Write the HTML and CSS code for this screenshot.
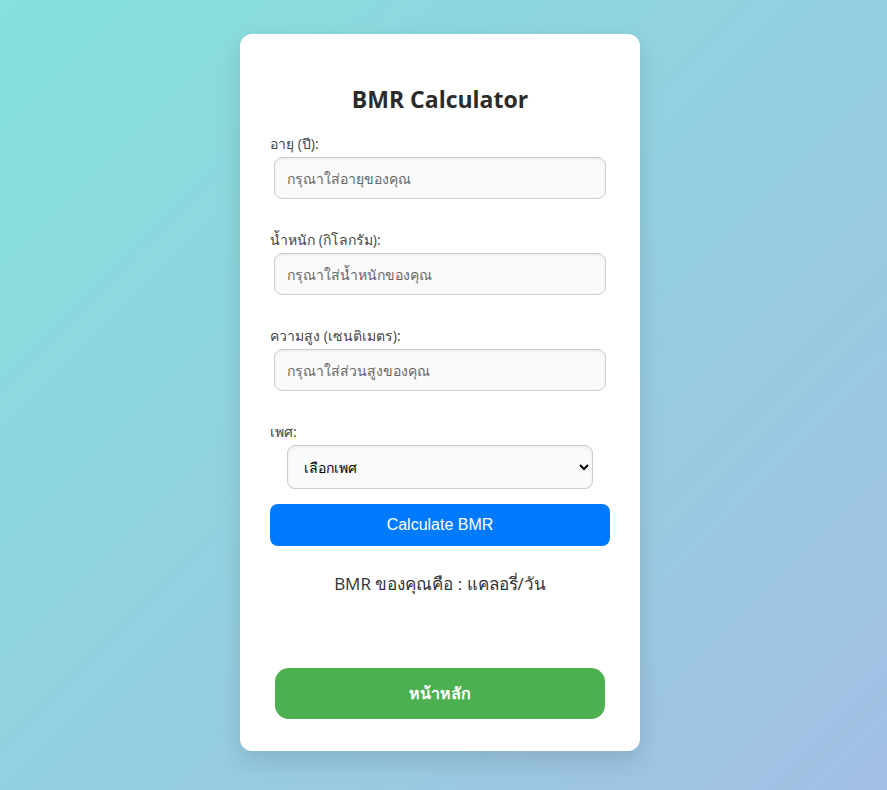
FILE: index.html
```html
<!DOCTYPE html>
<html lang="th">
<head>
<meta charset="utf-8">
<title>BMR Calculator</title>
<link rel="stylesheet" href="styles.css">
</head>
<body>
<main class="card">
  <h1 class="title">BMR Calculator</h1>
  <form class="form">
    <div class="field">
      <label class="label" for="age">อายุ (ปี):</label>
      <input class="input" id="age" type="number" placeholder="กรุณาใส่อายุของคุณ">
    </div>
    <div class="field">
      <label class="label" for="weight">น้ำหนัก (กิโลกรัม):</label>
      <input class="input" id="weight" type="number" placeholder="กรุณาใส่น้ำหนักของคุณ">
    </div>
    <div class="field">
      <label class="label" for="height">ความสูง (เซนติเมตร):</label>
      <input class="input" id="height" type="number" placeholder="กรุณาใส่ส่วนสูงของคุณ">
    </div>
    <div class="field field-last">
      <label class="label" for="gender">เพศ:</label>
      <select class="select" id="gender">
        <option>เลือกเพศ</option>
        <option>ชาย</option>
        <option>หญิง</option>
      </select>
    </div>
    <button type="button" class="btn-calc">Calculate BMR</button>
  </form>
  <p class="result">BMR ของคุณคือ : แคลอรี่/วัน</p>
  <button type="button" class="btn-home">หน้าหลัก</button>
</main>
</body>
</html>
```
FILE: styles.css
```css
html, body {
  margin: 0;
  padding: 0;
}
body {
  box-sizing: border-box;
  min-height: 790px;
  padding-right: 7px;
  background: linear-gradient(135deg, #84e1dc 0%, #a3bfe4 100%);
  font-family: "Open Sans", "Noto Sans", sans-serif;
  color: #333;
  display: flex;
  justify-content: center;
  align-items: flex-start;
}
.card {
  box-sizing: border-box;
  width: 400px;
  margin-top: 34px;
  background: #fff;
  border-radius: 12px;
  box-shadow: 0 10px 25px rgba(0, 0, 0, 0.12);
  padding: 50px 30px 32px;
  display: flex;
  flex-direction: column;
}
.title {
  margin: 0 0 21px;
  text-align: center;
  font-size: 23px;
  line-height: 30px;
  font-weight: 700;
  color: #2b2b2b;
}
.form {
  display: flex;
  flex-direction: column;
}
.field {
  display: flex;
  flex-direction: column;
  margin-bottom: 32px;
}
.field-last {
  margin-bottom: 15px;
}
.label {
  font-size: 14px;
  line-height: 17px;
  color: #444;
  margin-bottom: 5px;
}
.input {
  box-sizing: border-box;
  align-self: center;
  width: 332px;
  height: 42px;
  padding: 0 12px;
  border: 1px solid #ccc;
  border-radius: 8px;
  background: #fafafa;
  box-shadow: inset 0 1px 3px rgba(0,0,0,0.08);
  font-family: inherit;
  font-size: 14px;
  color: #333;
  outline: none;
}
.input::placeholder {
  color: #666;
}
.input::-webkit-outer-spin-button,
.input::-webkit-inner-spin-button {
  -webkit-appearance: none;
  margin: 0;
}
.select {
  box-sizing: border-box;
  align-self: center;
  width: 306px;
  height: 44px;
  padding: 0 12px;
  border: 1px solid #ccc;
  border-radius: 8px;
  background: #fafafa;
  box-shadow: inset 0 1px 3px rgba(0,0,0,0.08);
  font-family: inherit;
  font-size: 14px;
  color: #000;
}
.btn-calc {
  height: 42px;
  border: none;
  border-radius: 8px;
  background: #007bff;
  color: #fff;
  font-family: "Liberation Sans", Arial, sans-serif;
  font-size: 16px;
  cursor: pointer;
}
.result {
  margin: 27px 0 0;
  text-align: center;
  font-size: 17px;
  line-height: 22px;
  color: #333;
}
.btn-home {
  align-self: center;
  width: 330px;
  height: 51px;
  margin-top: 73px;
  border: none;
  border-radius: 14px;
  background: #4caf50;
  color: #fff;
  font-family: inherit;
  font-size: 16px;
  font-weight: 700;
  cursor: pointer;
}
```
